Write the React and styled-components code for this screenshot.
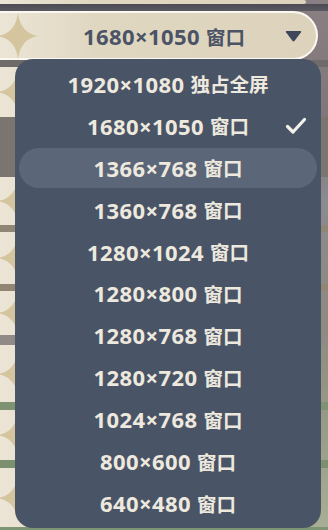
import React from "react";
import styled, { createGlobalStyle } from "styled-components";

const Global = createGlobalStyle`
  html, body { margin: 0; padding: 0; }
  body { width: 328px; height: 530px; overflow: hidden; background: #7d7579; }
  * { box-sizing: border-box; }
`;

const Page = styled.div`
  position: relative;
  width: 328px;
  height: 530px;
  overflow: hidden;
  background: linear-gradient(
    to bottom,
    #8a7f83 0px,
    #7f777b 120px,
    #8b8a8e 200px,
    #8f8a80 330px,
    #9aa08a 450px,
    #a9ae96 530px
  );
  font-family: "Noto Sans", "Noto Sans CJK SC", sans-serif;
`;

const Column = styled.div`
  display: flex;
  flex-direction: column;
`;

const Band = styled.div`
  height: ${(p) => p.$h}px;
  width: 100%;
  background: ${(p) => p.$c};
`;

const Row = styled.div`
  position: relative;
  height: ${(p) => p.$h}px;
  width: ${(p) => p.$w || 318}px;
  background: linear-gradient(to right, #ece5d6 0%, #e0d7c1 30%, #ddd3bc 100%);
  border-radius: 0 ${(p) => p.$h / 2}px ${(p) => p.$h / 2}px 0;
  display: flex;
  align-items: center;
  justify-content: center;
  ${(p) => p.$bordered && `border: 2px solid #fbf8f1; border-left: none;`}
`;

const StarWrap = styled.div`
  position: absolute;
  left: -2px;
  top: 50%;
  transform: translateY(-50%);
  width: 40px;
  height: 46px;
  display: flex;
`;

const SelectText = styled.span`
  font-size: 22px;
  font-weight: 700;
  color: #4b5366;
  letter-spacing: 0.4px;
  margin-left: 12px;
`;

const Cjk = styled.span`
  font-family: "Noto Sans CJK SC", sans-serif;
  font-size: 19.5px;
  font-weight: 700;
  margin-left: 6px;
  letter-spacing: 0;
`;

const Caret = styled.div`
  position: absolute;
  right: 14px;
  top: 50%;
  transform: translateY(-50%);
  width: 17px;
  height: 12px;
  display: flex;
`;

const Menu = styled.div`
  position: absolute;
  left: 15px;
  top: 59px;
  width: 306px;
  height: 469px;
  background: #4a5467;
  border-radius: 18px;
  padding: 4px;
  display: flex;
  flex-direction: column;
`;

const Item = styled.div`
  position: relative;
  height: 40px;
  margin: 1px 0;
  border-radius: 20px;
  background: ${(p) => (p.$hover ? "#5c6679" : "transparent")};
  display: flex;
  align-items: center;
  justify-content: center;
  color: #eee9de;
  font-size: 22px;
  font-weight: 700;
  letter-spacing: 0.4px;
`;

const Check = styled.div`
  position: absolute;
  right: 10px;
  top: 50%;
  transform: translateY(-50%);
  width: 22px;
  height: 18px;
  display: flex;
`;

const Star = () => (
  <svg width="40" height="46" viewBox="0 0 40 46">
    <path
      d="M20 0 Q22.5 20 40 23 Q22.5 26 20 46 Q17.5 26 0 23 Q17.5 20 20 0Z"
      fill="#d4c59f"
    />
  </svg>
);

const options = [
  ["1920×1080", "独占全屏"],
  ["1680×1050", "窗口"],
  ["1366×768", "窗口"],
  ["1360×768", "窗口"],
  ["1280×1024", "窗口"],
  ["1280×800", "窗口"],
  ["1280×768", "窗口"],
  ["1280×720", "窗口"],
  ["1024×768", "窗口"],
  ["800×600", "窗口"],
  ["640×480", "窗口"],
];

const bg = [
  { h: 50, band: 60, c: "#7a766f" },
  { h: 48, band: 7, c: "#8f8676" },
  { h: 52, band: 7, c: "#918674" },
  { h: 44, band: 10, c: "#8f8a86" },
  { h: 57, band: 8, c: "#7f9272" },
  { h: 50, band: 8, c: "#7c9070" },
  { h: 59, band: 10, c: "#7f9473" },
];

export default function App() {
  return (
    <>
      <Global />
      <Page>
        <Column>
          <Row $h={4} $w={306} />
          <Band $h={7} $c="linear-gradient(to bottom, #4c4b53, #5a5860)" />
          <Row $h={49} $bordered>
            <StarWrap>
              <Star />
            </StarWrap>
            <SelectText>
              1680×1050<Cjk>窗口</Cjk>
            </SelectText>
            <Caret>
              <svg width="17" height="12" viewBox="0 0 17 12">
                <path
                  d="M1.5 1 L15.5 1 Q16.8 1 16 2.2 L9.6 10.8 Q8.5 12 7.4 10.8 L1 2.2 Q0.2 1 1.5 1Z"
                  fill="#3f475a"
                />
              </svg>
            </Caret>
          </Row>
          <Band $h={7} $c="#6f6b68" />
          {bg.map((r, i) => (
            <React.Fragment key={i}>
              <Row $h={r.h}>
                <StarWrap>
                  <Star />
                </StarWrap>
              </Row>
              <Band $h={r.band} $c={r.c} />
            </React.Fragment>
          ))}
        </Column>
        <Menu>
          {options.map(([res, mode], i) => (
            <Item key={i} $hover={i === 2}>
              {res}
              <Cjk>{mode}</Cjk>
              {i === 1 && (
                <Check>
                  <svg width="22" height="18" viewBox="0 0 22 18">
                    <path
                      d="M2.5 9.5 L8 15 L19.5 2.5"
                      fill="none"
                      stroke="#f4f1ea"
                      strokeWidth="3.2"
                      strokeLinecap="round"
                      strokeLinejoin="round"
                    />
                  </svg>
                </Check>
              )}
            </Item>
          ))}
        </Menu>
      </Page>
    </>
  );
}
